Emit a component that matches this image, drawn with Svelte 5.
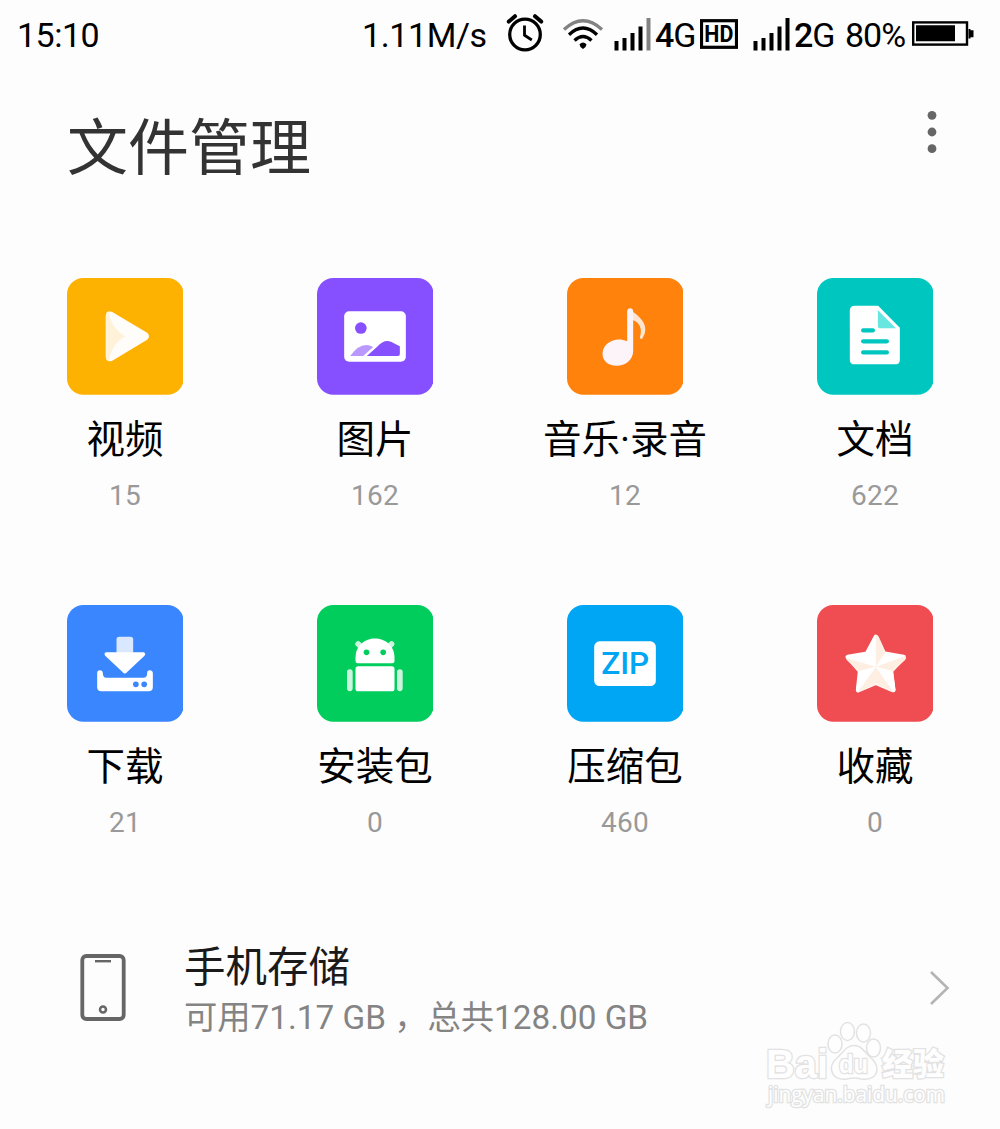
<script>
  const categories = [
    { id: 'video', name: '视频', count: 15, color: '#fdb100' },
    { id: 'image', name: '图片', count: 162, color: '#864fff' },
    { id: 'music', name: '音乐·录音', count: 12, color: '#ff820d' },
    { id: 'doc', name: '文档', count: 622, color: '#00c6c0' },
    { id: 'download', name: '下载', count: 21, color: '#3a86ff' },
    { id: 'apk', name: '安装包', count: 0, color: '#00cd5c' },
    { id: 'zip', name: '压缩包', count: 460, color: '#00a5f3' },
    { id: 'star', name: '收藏', count: 0, color: '#f04d52' }
  ];
  const storage = { free: '71.17 GB', total: '128.00 GB' };
</script>

<main class="screen">
  <header class="status">
    <span class="time">15:10</span>
    <span class="speed">1.11M/s</span>
    <svg class="alarm" width="38" height="40" viewBox="0 0 38 40" fill="none" stroke="#000">
      <circle cx="19" cy="21.5" r="15.3" stroke-width="3.3" />
      <path d="M2.8 8.6 9 3.2M35.2 8.6 29 3.2" stroke-width="4" stroke-linecap="round" />
      <path d="M18.5 12.5v9.7l7.3 4.8" stroke-width="2.8" />
    </svg>
    <svg class="wifi" width="42" height="34" viewBox="0 0 42 34" fill="none">
      <path d="M2 12.5Q21-5 40 12.5" stroke="#828282" stroke-width="3.2" />
      <path d="M7 17.7Q21 4.5 35 17.7" stroke="#000" stroke-width="3.3" />
      <path d="M12.5 23.5Q21 15.5 29.5 23.5" stroke="#000" stroke-width="3.3" />
      <path d="M17.5 27.2Q21 24 24.5 27.2 24.5 29.5 21 32 17.5 29.5 17.5 27.2Z" fill="#000" />
    </svg>
    <svg class="signal" width="37" height="34" viewBox="0 0 37 34">
      <path d="M.5 24h4v9.5h-4zM8.5 21h4v12.5h-4zM16.5 16h4v17.5h-4zM24.5 9.5h4v24h-4z" />
      <path d="M32.5 1h4v32.5h-4z" fill="#828282" />
    </svg>
    <span class="net"><b>4</b>G</span>
    <svg class="hd" width="38" height="30" viewBox="0 0 38 30">
      <rect x="1.5" y="1.7" width="35" height="26.6" fill="none" stroke="#000" stroke-width="3.2" />
      <text x="4.3" y="22.7" textLength="29" lengthAdjust="spacingAndGlyphs">HD</text>
    </svg>
    <svg class="signal second" width="37" height="34" viewBox="0 0 37 34">
      <path d="M.5 24h4v9.5h-4zM8.5 21h4v12.5h-4zM16.5 16h4v17.5h-4zM24.5 9.5h4v24h-4zM32.5 1h4v32.5h-4z" />
    </svg>
    <span class="net"><b>2</b>G</span>
    <span class="percent">80%</span>
    <svg class="battery" width="62" height="25" viewBox="0 0 62 25">
      <rect x="1.2" y="1.4" width="53.8" height="22.2" fill="none" stroke="#000" stroke-width="2.4" />
      <path d="M4 4.3h39v16H4zM56.5 8h2v1.3h3v7h-3v1.3h-2z" />
    </svg>
  </header>

  <section class="heading">
    <h1>文件管理</h1>
    <svg class="more" width="12" height="46" viewBox="0 0 12 46" fill="#666">
      <circle cx="6" cy="6.3" r="4.4" />
      <circle cx="6" cy="23" r="4.4" />
      <circle cx="6" cy="39.7" r="4.4" />
    </svg>
  </section>

  <section class="categories">
    {#each categories as item (item.id)}
      <div class="category">
        <svg class="tile" viewBox="0 0 350 350">
          <rect width="350" height="350" rx="49" fill={item.color} />
          <g transform="translate(-1.5 -1)">
            {#if item.id === 'video'}
              <path d="M118 114Q118 98 136 102L242 165Q253 175 242 186L136 250Q119 253 118 238Z" fill="#fffdf9" />
              <path d="M118 112Q119 105 126 101C132 136 148 160 176 176C147 192 133 218 127 251Q118 248 118 238Z" fill="#fff2d9" />
            {:else if item.id === 'image'}
              <rect x="83" y="101" width="185" height="151" rx="15" fill="#fff" />
              <circle cx="133" cy="151" r="17.5" fill="#864fff" />
              <path d="M101 235Q134 188 170 208L140 235Z" fill="#b999ff" />
              <path d="M151 235L182 207Q207 179 235 198L250 206V229Q250 235 244 235Z" fill="#864fff" />
            {:else if item.id === 'music'}
              <path d="M198 102C225 119 251 148 227 183Q221 187 220 179C229 151 218 134 198 126Z" fill="#ffe5cf" />
              <path d="M182 101Q183 92 191 92T200 101V219C200 246 177 264 150 264C124 264 108 248 108 229C108 198 144 175 182 191Z" fill="#fdf4fa" />
            {:else if item.id === 'doc'}
              <path d="M115 84H185L250 150V246Q250 260 236 260H115Q100 260 100 246V98Q100 84 115 84Z" fill="#fff" />
              <path d="M184 97L238 152H192Q184 152 184 144Z" fill="#68e7e1" />
              <path d="M140 158H169M140 191H211M140 224H211" stroke="#00c6c0" stroke-width="13" stroke-linecap="round" />
            {:else if item.id === 'download'}
              <path d="M150 145V104Q150 96 158 96H192Q200 96 200 104V145Z" fill="#d9e7ff" />
              <path d="M118 143H232Q239 147 234 153L182 202Q175 211 168 202L116 153Q111 147 118 143Z" fill="#fff" />
              <path d="M92 205Q92 197 100 197T109 205C109 215 113 219 119 219H231C238 219 242 215 242 205Q242 197 250 197T259 205V247Q259 260 246 260H105Q92 260 92 247Z" fill="#fff" />
              <circle cx="208" cy="239" r="8.5" fill="#3a86ff" />
              <circle cx="233" cy="239" r="8.5" fill="#3a86ff" />
            {:else if item.id === 'apk'}
              <path d="M125 118 137 130M225 118 213 130M100 202V251M250 202V251" stroke="#cdf5de" stroke-width="17" stroke-linecap="round" />
              <path d="M117 160C117 82 234 82 234 160V169Q234 176 227 176H124Q117 176 117 169Z" fill="#fff" />
              <rect x="117" y="185" width="117" height="75" rx="8" fill="#fff" />
              <circle cx="150" cy="143" r="8.5" fill="#00cd5c" />
              <circle cx="200" cy="143" r="8.5" fill="#00cd5c" />
            {:else if item.id === 'zip'}
              <rect x="83" y="110" width="185" height="134" rx="16" fill="#fff" />
              <text class="zip" x="104" y="209" textLength="144" lengthAdjust="spacingAndGlyphs">ZIP</text>
            {:else}
              <path d="M178 97 201 147 261 157 223 199 230 256 178 234 125 256 131 199 94 157 152 147Z" fill="#fff" stroke="#fff" stroke-width="14" stroke-linejoin="round" />
              <path d="M178 90Q184 91 187 97L207 141 178 186ZM178 186 266 155Q271 160 265 167L229 200Z" fill="#ffeee2" />
              <path d="M178 186 88 160Q88 163 93 168L128 200ZM178 186V238L123 263ZM178 186V238L232 263Z" fill="#ffeee2" />
              <path d="M178 186 128 200 119 253Q119 260 124 263ZM178 186 229 200 237 256Q236 262 232 263Z" fill="#fff" />
            {/if}
          </g>
        </svg>
        <span class="name">{item.name}</span>
        <span class="count">{item.count}</span>
      </div>
    {/each}
  </section>

  <section class="storage">
    <svg width="46" height="68" viewBox="0 0 46 68" fill="none" stroke="#666">
      <rect x="2.3" y="2" width="41.4" height="63" rx="4" stroke-width="3.8" />
      <path d="M15 7.2h16" stroke-width="2.4" />
      <circle cx="23" cy="55.5" r="3" stroke-width="2.5" />
    </svg>
    <div class="info">
      <h2>手机存储</h2>
      <p>可用{storage.free} ，总共{storage.total}</p>
    </div>
    <svg class="arrow" width="22" height="38" viewBox="0 0 22 38" fill="none" stroke="#b4b4b4" stroke-width="2.6">
      <path d="M2 3 18.5 19 2 35" />
    </svg>
  </section>

  <svg class="watermark" width="200" height="100" viewBox="0 0 200 100">
    <g class="outline">
      <text x="6" y="67" class="brand" textLength="62" lengthAdjust="spacingAndGlyphs">Bai</text>
      <ellipse cx="75" cy="33" rx="7" ry="9" />
      <ellipse cx="87.5" cy="20.500" rx="7" ry="9" />
      <ellipse cx="103.5" cy="22" rx="7" ry="9" />
      <ellipse cx="113.5" cy="37" rx="7" ry="9" />
      <path d="M94 34.5C86 34.5 84 41 77 47C72 51 71 55 71.500 59C73 67 80 69 87 68Q94 66 101 68C109 69 116 67 117 59C117 54 115 50 110 46C104 41 102 34.5 94 34.5Z" />
      <text x="79" y="62" class="du" textLength="29" lengthAdjust="spacingAndGlyphs">du</text>
      <text x="122" y="64" class="cn">经验</text>
      <text x="8" y="91" class="site" textLength="177" lengthAdjust="spacingAndGlyphs">jingyan.baidu.com</text>
    </g>
  </svg>
</main>

<style>
  :global(body) {
    background: #fdfdfd;
  }
  .screen {
    width: 1000px;
    height: 1129px;
    position: relative;
    overflow: hidden;
    background: #fdfdfd;
    color: #000;
    font-family: Roboto, 'Noto Sans CJK SC', sans-serif;
  }
  svg {
    display: block;
    flex: none;
  }
  h1, h2, p {
    margin: 0;
    font-weight: 400;
  }
  .status {
    display: flex;
    align-items: center;
    height: 70px;
    padding-left: 17px;
    font-size: 34px;
    line-height: 70px;
    white-space: nowrap;
  }
  .status span {
    flex: none;
  }
  .time {
    width: 345px;
    letter-spacing: -0.5px;
  }
  .speed {
    width: 144px;
    letter-spacing: -0.4px;
  }
  .alarm {
    margin-top: -4px;
  }
  .wifi {
    margin: -2px 0 0 18px;
  }
  .signal {
    margin: -3px 0 0 10px;
  }
  .net {
    width: 44px;
    margin-left: 4px;
    letter-spacing: -1px;
  }
  .net b {
    font-weight: 500;
  }
  .hd {
    margin: -3px 0 0 1px;
  }
  .hd text {
    font: 700 23px Roboto, sans-serif;
  }
  .second {
    margin-left: 15px;
  }
  .percent {
    width: 67px;
    margin-left: 7px;
    letter-spacing: -1px;
  }
  .battery {
    margin-top: -4px;
  }
  .heading {
    display: flex;
    justify-content: space-between;
    height: 208px;
    padding: 39px 62px 0 67px;
    box-sizing: border-box;
  }
  h1 {
    margin-top: 4px;
    color: #333;
    font-size: 61px;
    line-height: 72px;
  }
  .categories {
    display: grid;
    grid-template-columns: repeat(4, 250px);
    grid-auto-rows: 327px;
  }
  .category {
    display: flex;
    flex-direction: column;
    align-items: center;
  }
  .tile {
    width: 116.7px;
    height: 116.7px;
  }
  .zip {
    font: 500 94px Roboto, sans-serif;
    fill: #00a5f3;
  }
  .name {
    margin-top: 20px;
    font-size: 38.5px;
    line-height: 50px;
  }
  .count {
    margin-top: 14px;
    color: #999;
    font-size: 28px;
    line-height: 34px;
    letter-spacing: 0.2px;
  }
  .storage {
    display: flex;
    align-items: center;
    height: 112px;
    padding: 0 49px 0 80px;
  }
  .info {
    flex: 1;
    margin: 6px 0 0 58px;
  }
  h2 {
    color: #1a1a1a;
    font-size: 41.5px;
    line-height: 54px;
  }
  .info p {
    color: #848484;
    font-size: 33.3px;
    line-height: 46px;
  }
  .watermark {
    position: absolute;
    left: 760px;
    top: 1011px;
  }
  .outline {
    fill: #fefefe;
    stroke: #e2e2e2;
    stroke-width: 1.5;
  }
  .outline text {
    paint-order: stroke;
    stroke-width: 2.6;
  }
  .brand {
    font: 700 41px 'Liberation Sans', sans-serif;
  }
  .du {
    font: 700 26px 'Liberation Sans', sans-serif;
  }
  .cn {
    font: 900 31px 'Noto Sans CJK SC', sans-serif;
  }
  .site {
    font: 400 21px 'Open Sans', sans-serif;
  }
</style>
